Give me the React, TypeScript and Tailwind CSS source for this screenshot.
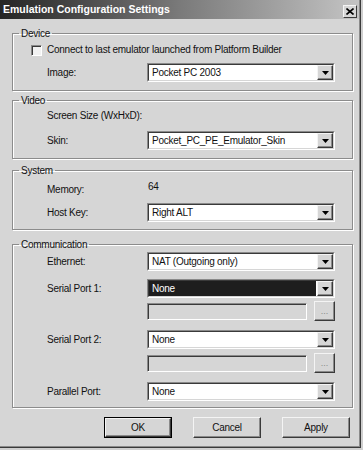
import React from "react";

const F = "font-['Liberation_Sans',Arial,sans-serif]";
const T = "text-[10px] leading-[12px] tracking-[-0.25px] text-[#111]";

function Arrow() {
  return (
    <div className="flex h-full w-[16px] items-center justify-center border border-t-[#f4f4f4] border-l-[#f4f4f4] border-b-[#3a3a3a] border-r-[#3a3a3a] bg-[#d6d6d6] shadow-[inset_-1px_-1px_0_#8a8a8a]">
      <svg width="7" height="4" viewBox="0 0 7 4">
        <path d="M0 0H7L3.5 4Z" fill="#000" />
      </svg>
    </div>
  );
}

function Select({ value, dark }: { value: string; dark?: boolean }) {
  return (
    <div className="flex h-[19px] w-[188px] border border-t-[#8a8a8a] border-l-[#8a8a8a] border-b-white border-r-white">
      <div className="flex flex-1 border border-t-[#3a3a3a] border-l-[#3a3a3a] border-b-[#d6d6d6] border-r-[#d6d6d6] bg-white">
        <div
          className={`flex flex-1 items-center pl-[3px] text-[10px] leading-[12px] tracking-[-0.25px] ${
            dark ? "bg-[#1e1e1e] text-white mr-[1px]" : "text-[#111]"
          }`}
        >
          {value}
        </div>
        <Arrow />
      </div>
    </div>
  );
}

function PathRow() {
  return (
    <div className="flex h-[20px] w-[188px] items-center justify-between">
      <div className="h-[17px] w-[160px] border border-t-[#8a8a8a] border-l-[#8a8a8a] border-b-white border-r-white bg-[#d6d6d6] shadow-[inset_1px_1px_0_#3a3a3a]" />
      <div className="flex h-[20px] w-[21px] items-end justify-center border border-t-[#f4f4f4] border-l-[#f4f4f4] border-b-[#3a3a3a] border-r-[#3a3a3a] pb-[4px] text-[9px] leading-[9px] text-[#8a8a8a] shadow-[inset_-1px_-1px_0_#8a8a8a]">
        ...
      </div>
    </div>
  );
}

function Label({ children }: { children: React.ReactNode }) {
  return <div className={T}>{children}</div>;
}

function Row({
  label,
  children,
  h = "h-[19px]",
  mt,
}: {
  label?: string;
  children: React.ReactNode;
  h?: string;
  mt: string;
}) {
  return (
    <div className={`grid grid-cols-[100px_188px] items-center pl-[34px] ${h} ${mt}`}>
      <Label>{label}</Label>
      {children}
    </div>
  );
}

function Group({
  title,
  mt,
  pb,
  children,
}: {
  title: string;
  mt: string;
  pb: string;
  children: React.ReactNode;
}) {
  return (
    <fieldset
      className={`m-0 w-[341px] min-w-0 border border-[#8c8c8c] p-0 shadow-[inset_1px_1px_0_#fff,1px_1px_0_#fff] ${mt} ${pb}`}
    >
      <legend className="ml-[6px] px-[2px] text-[10px] leading-[13px] tracking-[-0.25px] text-[#111]">{title}</legend>
      {children}
    </fieldset>
  );
}

function Btn({ children, def }: { children: React.ReactNode; def?: boolean }) {
  return (
    <div className={`h-[21px] w-[68px] ${def ? "border border-black" : ""} flex`}>
      <div className={`flex flex-1 items-center justify-center border border-t-[#f4f4f4] border-l-[#f4f4f4] border-b-[#3a3a3a] border-r-[#3a3a3a] bg-[#d6d6d6] shadow-[inset_-1px_-1px_0_#8a8a8a] ${T}`}>
        {children}
      </div>
    </div>
  );
}

export default function App() {
  return (
    <div className={`h-[450px] w-[363px] bg-[#cfcfcf] ${F}`}>
      <div className="h-[448px] w-[361px] border-b border-r border-[#3a3a3a]">
        <div className="flex h-full flex-col border-b border-r border-[#8a8a8a] bg-[#d6d6d6]">
          <div className="flex h-[19px] items-start justify-between bg-gradient-to-r from-[#262626] via-[#7a7a7a] to-[#c4c4c4] pr-[2px]">
            <div className="pl-[3px] pt-[3px] text-[10.5px] font-bold leading-[13px] text-white">
              Emulation Configuration Settings
            </div>
            <div className="mt-[5px] flex h-[13px] w-[14px] items-center justify-center border border-t-[#f4f4f4] border-l-[#f4f4f4] border-b-[#3a3a3a] border-r-[#3a3a3a] bg-[#d6d6d6]">
              <svg width="8" height="7" viewBox="0 0 8 7">
                <path d="M0.5 0.5L7.5 6.5M7.5 0.5L0.5 6.5" stroke="#000" strokeWidth="1.6" />
              </svg>
            </div>
          </div>

          <div className="flex flex-col pl-[12px]">
            <Group title="Device" mt="mt-[8px]" pb="pb-[8px]">
              <div className="mt-[2px] flex h-[16px] items-center pl-[18px]">
                <div className="h-[11px] w-[11px] border border-t-[#8a8a8a] border-l-[#8a8a8a] border-b-white border-r-white bg-[#f2f2f2] shadow-[inset_1px_1px_0_#3a3a3a]" />
                <div className={`ml-[5px] ${T}`}>
                  Connect to last emulator launched from Platform Builder
                </div>
              </div>
              <Row label="Image:" mt="mt-[5px]">
                <Select value="Pocket PC 2003" />
              </Row>
            </Group>

            <Group title="Video" mt="mt-[3px]" pb="pb-[8px]">
              <div className="mt-[1px] flex h-[16px] items-center pl-[34px]">
                <Label>Screen Size (WxHxD):</Label>
              </div>
              <Row label="Skin:" mt="mt-[7px]">
                <Select value="Pocket_PC_PE_Emulator_Skin" />
              </Row>
            </Group>

            <Group title="System" mt="mt-[5px]" pb="pb-[7px]">
              <Row label="Memory:" mt="mt-[4px]" h="h-[16px]">
                <div className={`mb-[6px] pl-[1px] ${T}`}>64</div>
              </Row>
              <Row label="Host Key:" mt="mt-[6px]">
                <Select value="Right ALT" />
              </Row>
            </Group>

            <Group title="Communication" mt="mt-[8px]" pb="pb-[6px]">
              <Row label="Ethernet:" mt="mt-[1px]">
                <Select value="NAT (Outgoing only)" />
              </Row>
              <Row label="Serial Port 1:" mt="mt-[8px]">
                <Select value="None" dark />
              </Row>
              <Row mt="mt-[3px]" h="h-[20px]">
                <PathRow />
              </Row>
              <Row label="Serial Port 2:" mt="mt-[9px]">
                <Select value="None" />
              </Row>
              <Row mt="mt-[4px]" h="h-[20px]">
                <PathRow />
              </Row>
              <Row label="Parallel Port:" mt="mt-[9px]">
                <Select value="None" />
              </Row>
            </Group>

            <div className="ml-[92px] mt-[9px] flex gap-[21px]">
              <Btn def>OK</Btn>
              <Btn>Cancel</Btn>
              <Btn>Apply</Btn>
            </div>
          </div>
        </div>
      </div>
    </div>
  );
}
